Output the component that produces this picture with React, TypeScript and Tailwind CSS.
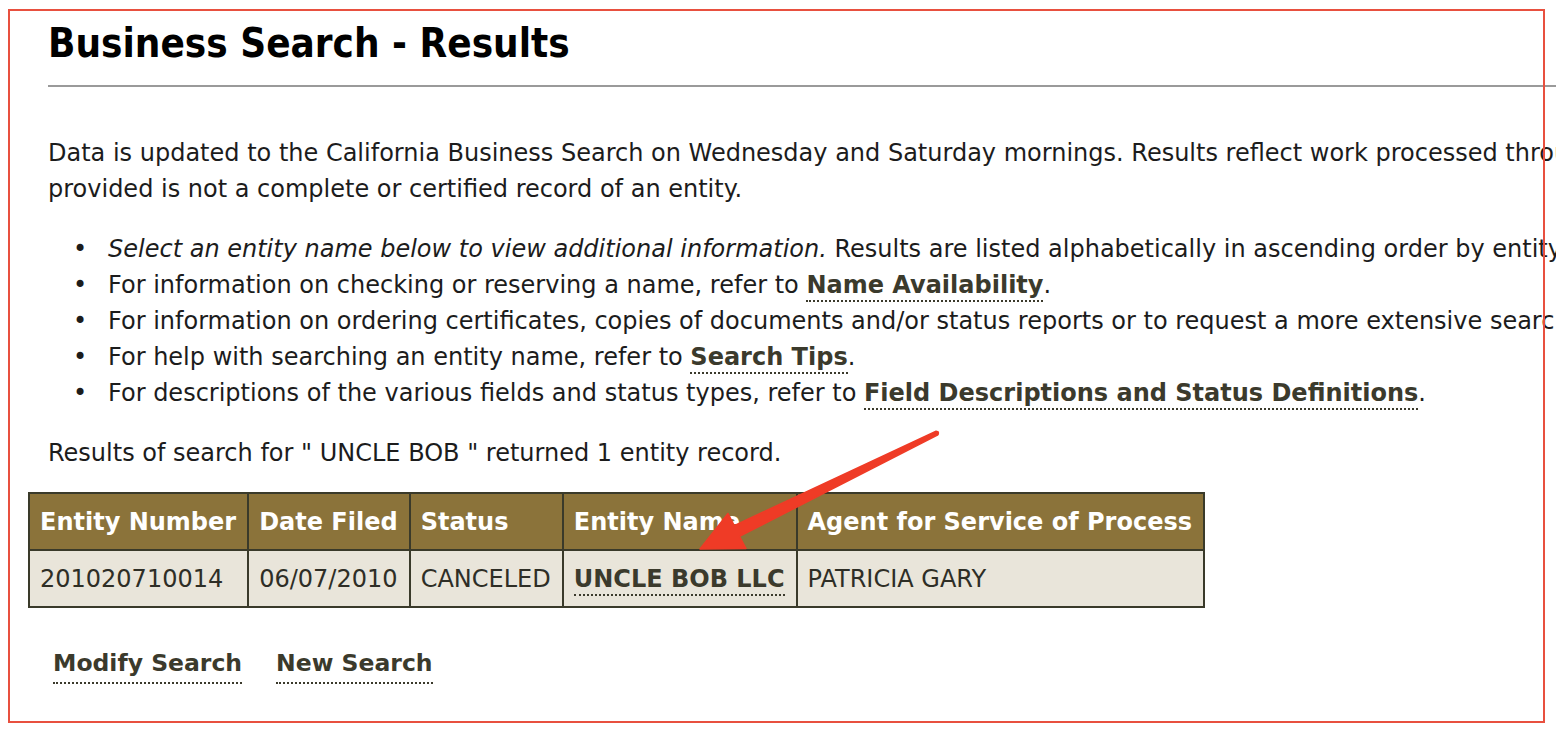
import React from 'react';

const linkCls =
  'font-bold text-[#3b3a2c] border-b-2 border-dotted border-[#3b3a2c] pb-[1px]';

const bullets: React.ReactNode[] = [
  <>
    <i>Select an entity name below to view additional information.</i> Results are listed alphabetically in ascending order by entity name.
  </>,
  <>
    For information on checking or reserving a name, refer to <a className={linkCls}>Name Availability</a>.
  </>,
  <>
    For information on ordering certificates, copies of documents and/or status reports or to request a more extensive search, refer to{' '}
    <a className={linkCls}>Information Requests</a>.
  </>,
  <>
    For help with searching an entity name, refer to <a className={linkCls}>Search Tips</a>.
  </>,
  <>
    For descriptions of the various fields and status types, refer to{' '}
    <a className={linkCls}>Field Descriptions and Status Definitions</a>.
  </>,
];

const columns = ['Entity Number', 'Date Filed', 'Status', 'Entity Name', 'Agent for Service of Process'];

const cell = 'border-2 border-[#3a3a2a] pl-[10px] pr-[11px] whitespace-nowrap';

export default function App() {
  return (
    <div className="relative w-[1556px] h-[732px] overflow-hidden bg-white text-[#1c1c1c] font-['DejaVu_Sans',sans-serif]">
      <div className="w-[2000px] pl-[48px] pt-[22px]">
        <h1 className="text-[40px] leading-[42px] font-bold text-black font-['DejaVu_Sans_Condensed','DejaVu_Sans',sans-serif]">
          Business Search - Results
        </h1>
        <div className="mt-[21px] h-[2px] bg-[#9a9a9a]" />

        <div className="mt-[48px] text-[24px] leading-[36px] whitespace-nowrap">
          <p>
            Data is updated to the California Business Search on Wednesday and Saturday mornings. Results reflect work processed through Tuesday. The data
          </p>
          <p>provided is not a complete or certified record of an entity.</p>
        </div>

        <ul className="mt-[24px] text-[24px] leading-[36px] whitespace-nowrap">
          {bullets.map((b, i) => (
            <li key={i} className="flex">
              <span className="w-[60px] pl-[25px] shrink-0">•</span>
              <span>{b}</span>
            </li>
          ))}
        </ul>

        <p className="mt-[24px] text-[24px] leading-[36px] whitespace-nowrap">
          Results of search for " UNCLE BOB " returned 1 entity record.
        </p>

        <table className="mt-[21px] -ml-[20px] border-collapse border-2 border-[#3a3a2a] text-[24px]">
          <thead>
            <tr className="bg-[#8b733a] text-white">
              {columns.map((c) => (
                <th key={c} className={`h-[57px] text-left font-bold ${cell}`}>
                  {c}
                </th>
              ))}
            </tr>
          </thead>
          <tbody>
            <tr className="bg-[#e9e5da] text-[#2e2e26]">
              <td className={`h-[57px] ${cell}`}>201020710014</td>
              <td className={cell}>06/07/2010</td>
              <td className={cell}>CANCELED</td>
              <td className={cell}>
                <a className={linkCls}>UNCLE BOB LLC</a>
              </td>
              <td className={cell}>PATRICIA GARY</td>
            </tr>
          </tbody>
        </table>

        <div className="mt-[38px] ml-[5px] flex gap-[34px] text-[23.5px]">
          <a className={linkCls}>Modify Search</a>
          <a className={linkCls}>New Search</a>
        </div>
      </div>

      {/* annotation frame */}
      <div className="absolute left-[8px] top-[9px] w-[1537px] h-[714px] border-2 border-[#e8503f] pointer-events-none" />

      {/* annotation arrow */}
      <svg className="absolute left-0 top-0 pointer-events-none" width="1556" height="732">
        <polygon
          points="936.1,431.2 734.2,525.6 728,513.5 700,549 746,548.5 739.5,536.4 937.9,434.8"
          fill="#ef3b26"
          stroke="#ef3b26"
          strokeWidth="1.5"
          strokeLinejoin="round"
        />
        <circle cx="937" cy="433" r="2.2" fill="#ef3b26" />
      </svg>
    </div>
  );
}
